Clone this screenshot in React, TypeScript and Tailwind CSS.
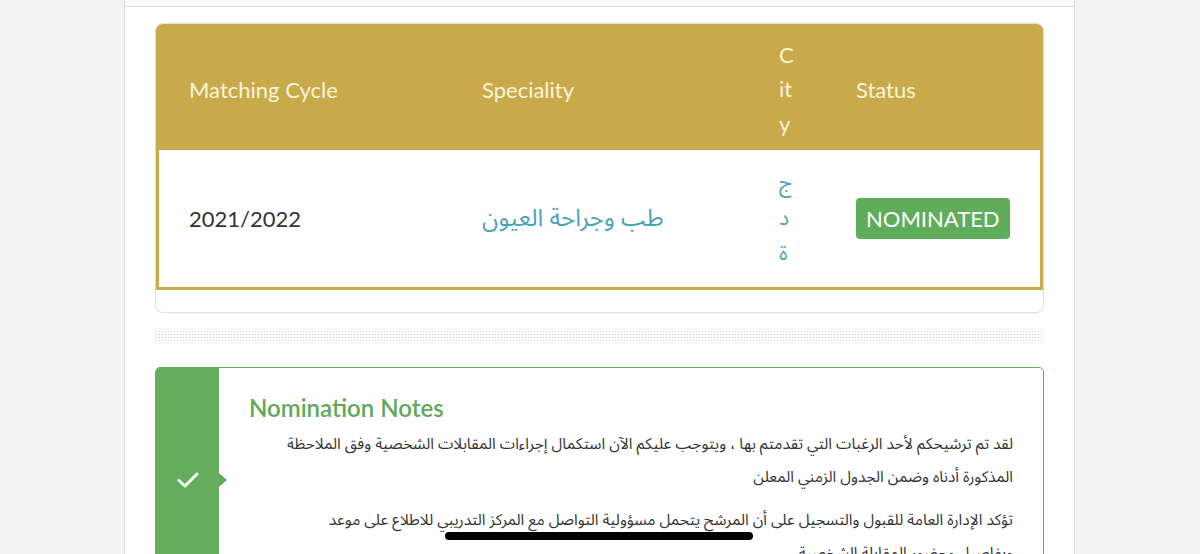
import React from "react";

const arabic = { fontFamily: '"Noto Sans Arabic", "DejaVu Sans", sans-serif' };

export default function App() {
  return (
    <div
      className="relative flex h-[554px] w-[1200px] overflow-hidden bg-[#f4f4f4]"
      style={{ fontFamily: 'Lato, "Noto Sans", sans-serif' }}
    >
      <div className="w-[124px] shrink-0" />
      <main className="w-[951px] shrink-0 border-x border-[#dcdcdc] bg-white">
        <div className="h-[6px] bg-[#fbfbfb]" />
        <div className="border-t border-[#dcdcdc] px-[30px] pt-[16px]">
          {/* Table card */}
          <div className="overflow-hidden rounded-[8px] border border-[#dedede]">
            <div className="grid h-[126px] grid-cols-[293px_297px_77px_1fr] items-center border-x-[3px] border-[#c9aa4a] bg-[#c9aa4a] pt-[5px] text-[22px] text-[#fbf4dd]">
              <div className="pl-[30px]">Matching Cycle</div>
              <div className="pl-[30px]">Speciality</div>
              <div className="pl-[30px] leading-[34.5px]">
                <div>C</div>
                <div>it</div>
                <div>y</div>
              </div>
              <div className="pl-[30px]">Status</div>
            </div>
            <div className="grid h-[140px] grid-cols-[293px_297px_77px_1fr] items-center border-x-[3px] border-b-[3px] border-[#c9aa4a] text-[22px]">
              <div className="pl-[30px] text-[#333333]">2021/2022</div>
              <div className="pl-[30px] text-[24px] text-[#4ca4b6]" style={arabic}>
                <span dir="rtl">طب وجراحة العيون</span>
              </div>
              <div className="pl-[30px] text-[21px] leading-[35px] text-[#4ca4b6]" style={arabic}>
                <div>ج</div>
                <div>د</div>
                <div>ة</div>
              </div>
              <div className="pl-[30px]">
                <span className="inline-flex h-[41px] items-center rounded-[4px] bg-[#5fad5a] px-[10px] text-[22px] leading-none text-white">
                  NOMINATED
                </span>
              </div>
            </div>
            <div className="h-[22px]" />
          </div>

          {/* Dotted separator */}
          <div className="mt-[17px] h-[13px] bg-[radial-gradient(#c9c9c9_0.9px,transparent_1px)] bg-[length:3px_3px]" />

          {/* Notes card */}
          <div className="mt-[24px] flex h-[226px] overflow-hidden rounded-[5px] border border-[#5fb058]">
            <div className="relative flex w-[63px] shrink-0 items-center justify-center bg-[#63ad5c]">
              <svg width="22" height="16" viewBox="0 0 22 16" fill="none">
                <path d="M2 8.5 L8 14 L20 2" stroke="white" strokeWidth="3" strokeLinecap="round" strokeLinejoin="round" />
              </svg>
              <div className="absolute left-full top-1/2 h-0 w-0 -translate-y-1/2 border-y-[7px] border-l-[8px] border-y-transparent border-l-[#63ad5c]" />
            </div>
            <div className="flex-1 pl-[30px] pr-[30px] pt-[24px]">
              <div className="text-[24px] font-semibold leading-[32px] text-[#5ea95a]">Nomination Notes</div>
              <div dir="rtl" className="mt-[4px] pl-[22px] text-[15.5px] leading-[33px] text-[#333333]" style={arabic}>
                <p>
                  لقد تم ترشيحكم لأحد الرغبات التي تقدمتم بها ، ويتوجب عليكم الآن استكمال إجراءات المقابلات الشخصية وفق الملاحظة المذكورة أدناه وضمن الجدول الزمني المعلن
                </p>
                <p className="mt-[10px]">
                  تؤكد الإدارة العامة للقبول والتسجيل على أن المرشح يتحمل مسؤولية التواصل مع المركز التدريبي للاطلاع على موعد وبفاصيل وحضور المقابلة الشخصية
                </p>
              </div>
            </div>
          </div>
        </div>
      </main>
      <div className="flex-1" />

      {/* iOS home indicator */}
      <div className="absolute left-[445px] top-[532px] h-[8px] w-[308px] rounded-full bg-black" />
    </div>
  );
}
